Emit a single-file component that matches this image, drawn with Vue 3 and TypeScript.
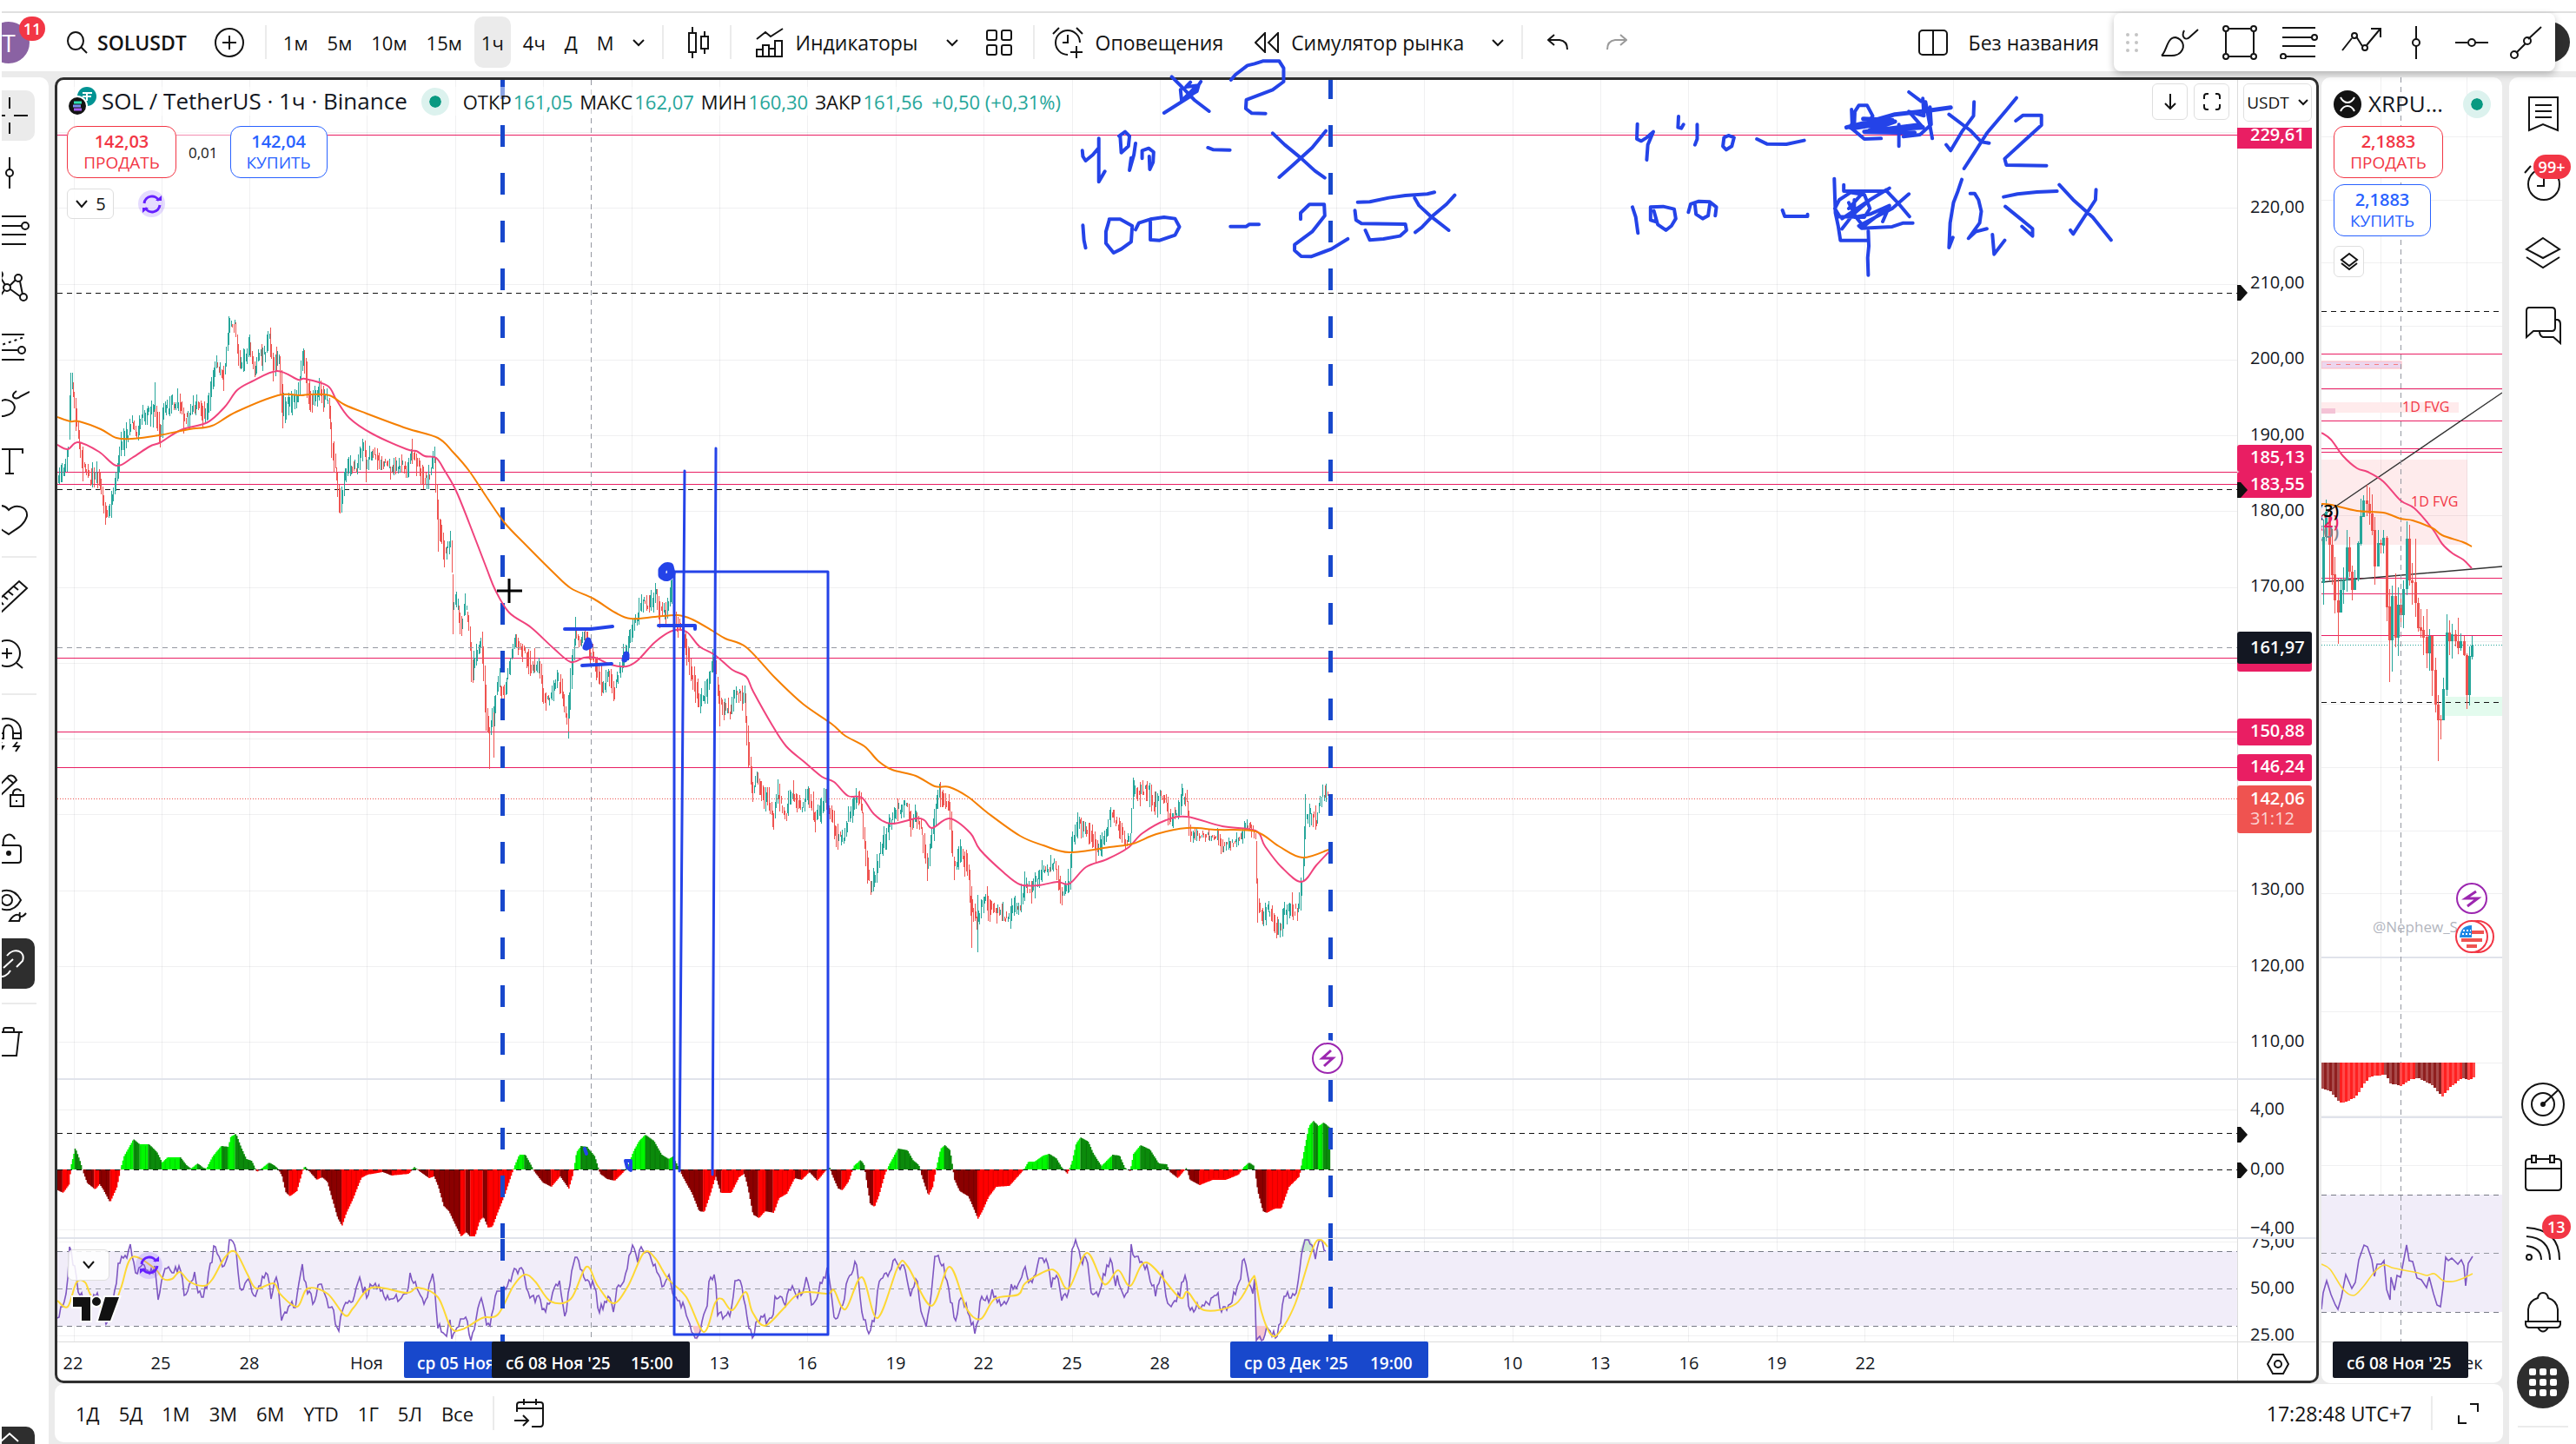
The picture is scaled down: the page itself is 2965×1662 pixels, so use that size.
<script setup lang="ts">
type Point = [number, number]

const intervals = ['1м', '5м', '10м', '15м', '1ч', '4ч', 'Д', 'М']
const ranges = ['1Д', '5Д', '1М', '3М', '6М', 'YTD', '1Г', '5Л', 'Все']

const toPoints = (raw: string): Point[] =>
  raw.trim().split(/\s+/).map((pair) => pair.split(',').map(Number) as Point)

/* Seeded generator, so the hourly series is the same on every load */
function randomSource(seed: number) {
  let state = seed
  return () => {
    state = (state * 1664525 + 1013904223) % 4294967296
    return state / 4294967296
  }
}

/* Linear interpolation between anchor points */
function sample(points: Point[], x: number): number {
  for (let i = 1; i < points.length; i++) {
    if (x <= points[i][0]) {
      const [x0, y0] = points[i - 1]
      const [x1, y1] = points[i]
      return y0 + ((y1 - y0) * (x - x0)) / (x1 - x0 || 1)
    }
  }
  return points[points.length - 1][1]
}

const line = (points: Point[]) => 'M' + points.map((p) => p.join(',')).join(' L')

/* Smooth path through the anchors (Catmull-Rom to Bezier) */
function curve(points: Point[]): string {
  let d = `M${points[0].join(',')}`
  for (let i = 0; i < points.length - 1; i++) {
    const p0 = points[i - 1] ?? points[i]
    const p1 = points[i]
    const p2 = points[i + 1]
    const p3 = points[i + 2] ?? p2
    const c = [p1[0] + (p2[0] - p0[0]) / 6, p1[1] + (p2[1] - p0[1]) / 6, p2[0] - (p3[0] - p1[0]) / 6, p2[1] - (p3[1] - p1[1]) / 6]
    d += ` C${c.map((n) => n.toFixed(1)).join(',')},${p2.join(',')}`
  }
  return d
}

const price = toPoints(`66,556 73,544 79,519 80,470 82,440 86,469 90,497 95,536 104,551 111,544 116,561 121,590 124,597 129,576 134,551 139,515
147,501 152,486 157,504 163,479 172,476 178,472 184,501 189,472 198,465 207,463 211,481 217,483 222,465 229,469 234,479 241,461
248,419 254,424 258,433 264,376 271,376 275,419 282,417 287,394 293,426 299,408 305,408 309,386 314,419 321,411 325,472 333,463
343,454 349,408 354,447 358,465 364,458 368,440 371,461 378,458 382,511 387,540 391,583 397,551 402,536 410,538 419,511 421,540
427,519 435,529 450,540 463,535 468,544 473,522 481,536 488,554 495,547 500,522 502,560 504,600 508,619 512,636 519,622 521,697
527,690 530,722 536,697 540,715 543,779 549,751 554,733 559,811 563,845 568,822 574,783 580,804 586,772 593,736 604,751 611,769
620,761 625,801 634,804 642,783 648,801 654,832 657,783 662,729 668,740 673,729 680,751 688,772 692,790 700,779 707,794 713,772
722,747 731,715 739,694 749,694 755,686 759,704 768,701 773,679 777,715 785,729 791,751 797,779 805,808 813,797 820,761 824,769
828,811 841,819 847,798 857,802 860,847 866,908 871,896 878,916 885,920 890,948 895,912 904,937 911,912 922,929 930,912 939,945
949,920 957,937 963,965 970,965 979,933 987,915 992,933 998,998 1002,1018 1008,1010 1014,974 1022,957 1030,933 1037,929 1044,929
1049,949 1054,937 1061,957 1067,1000 1073,961 1080,910 1087,920 1093,929 1098,998 1106,978 1114,1002 1118,1043 1125,1060 1129,1047
1134,1035 1141,1047 1149,1051 1160,1055 1168,1043 1174,1043 1180,1018 1187,1022 1198,1006 1206,1002 1214,994 1222,1027 1231,1014
1234,965 1241,949 1252,957 1263,978 1271,965 1278,937 1288,949 1296,969 1301,961 1304,908 1315,910 1323,910 1328,925 1339,916
1347,941 1355,937 1361,916 1366,920 1370,961 1385,961 1401,963 1406,976 1423,967 1430,961 1435,947 1445,961 1447,1030 1453,1055
1461,1047 1469,1071 1475,1071 1478,1049 1485,1045 1494,1049 1499,1018 1502,945 1509,937 1515,945 1522,912 1529,918`)

const fastMa = toPoints(`66,512 78,517 90,509 114,520 134,536 152,527 172,514 185,509 208,495 239,486 259,468 273,449 290,439 319,427
343,437 351,436 377,444 387,460 402,481 428,499 468,517 479,519 489,525 502,527 512,542 525,565 540,602 560,654 570,679 586,705 611,722
637,746 657,762 672,757 685,757 703,765 721,767 734,760 754,739 774,726 790,727 805,744 823,754 843,771 859,779 867,796 889,835
905,859 927,878 946,894 960,900 976,916 992,918 1006,937 1025,948 1054,942 1064,944 1073,953 1093,942 1117,959 1128,978 1155,1004
1174,1018 1195,1019 1217,1015 1231,1017 1250,998 1274,989 1298,976 1315,959 1342,944 1366,940 1407,951 1445,956 1456,974
1475,998 1498,1015 1515,996 1529,981`)

const slowMa = toPoints(`66,480 81,485 91,485 116,494 134,504 152,505 183,501 218,494 244,490 272,474 320,455 346,455 356,454 379,455
397,466 422,476 468,493 504,504 522,521 540,542 560,572 581,602 606,628 637,659 657,677 683,689 708,705 726,712 754,710 780,708
797,713 820,726 835,735 859,745 892,780 924,810 957,833 973,847 995,859 1011,876 1027,886 1054,893 1076,905 1093,906 1114,917
1136,935 1174,962 1201,973 1231,981 1277,975 1304,971 1331,960 1366,953 1401,955 1445,957 1472,974 1499,987 1529,978`)

const momentum = toPoints(`66,-24 72,-27 79,-17 81,4 86,25 92,8 95,-3 100,-16 109,-23 114,-17 118,-23 126,-38 134,-20 138,0 142,15
153,35 160,29 171,29 180,20 186,8 192,14 207,14 214,5 219,1 227,7 233,2 237,1 244,15 254,27 262,26 265,38 271,41 277,25 283,12
289,10 295,-3 300,1 309,8 316,4 320,0 324,-8 328,-26 333,-31 341,-25 347,-4 350,4 355,-2 364,-12 370,-9 376,-14 382,-35 388,-56
393,-65 398,-50 406,-33 415,-10 422,-6 440,-3 450,-7 470,-5 476,3 482,-2 493,-10 499,-8 504,-20 510,-42 516,-48 524,-65 530,-77
536,-72 540,-77 546,-77 552,-58 556,-55 561,-67 566,-66 572,-50 580,-30 586,-12 592,5 597,17 604,17 609,8 614,-2 624,-15 634,-20
644,-8 654,-22 659,-5 663,20 668,27 675,26 684,15 690,-5 698,-11 707,-13 716,-4 722,3 728,20 735,33 742,40 752,33 761,17 769,12
774,15 779,5 785,-8 796,-28 804,-48 810,-49 818,-25 823,-8 829,-27 841,-27 850,-9 856,-5 860,-20 866,-52 873,-56 880,-48 890,-50
896,-33 905,-28 914,-10 922,-12 931,-3 940,-13 950,-1 954,3 957,-6 964,-22 969,-24 976,-14 982,4 990,11 994,5 997,-15 1001,-40
1006,-43 1011,-30 1018,-5 1023,6 1033,24 1044,22 1050,11 1057,5 1061,-10 1068,-30 1073,-20 1077,2 1082,24 1087,28 1093,22
1098,-12 1104,-25 1114,-31 1120,-45 1125,-57 1130,-48 1137,-32 1146,-20 1161,-19 1170,-9 1178,0 1183,9 1190,9 1200,16 1207,18
1215,13 1221,3 1228,-5 1233,8 1238,30 1243,37 1252,32 1258,18 1267,4 1280,17 1288,16 1294,2 1300,-2 1304,18 1312,28 1323,23
1333,7 1342,6 1346,-3 1355,-10 1365,2 1369,-12 1380,-18 1395,-12 1410,-12 1425,-6 1431,3 1437,8 1443,4 1447,-25 1453,-48
1457,-50 1467,-45 1474,-45 1483,-20 1495,-8 1499,15 1506,50 1511,56 1517,50 1523,54 1530,48`)

const rsi = toPoints(`66,1520 72,1500 77,1488 80,1438 85,1455 90,1487 100,1500 112,1487 123,1528 130,1500 137,1450 145,1447 150,1433
157,1475 162,1455 172,1468 178,1460 182,1495 188,1465 200,1460 205,1465 207,1457 212,1490 218,1480 223,1465 231,1495 238,1478
246,1437 251,1442 259,1463 264,1428 271,1432 275,1480 280,1487 286,1470 293,1498 300,1476 307,1465 312,1490 319,1472 324,1518
330,1508 340,1500 348,1457 353,1485 360,1498 368,1478 375,1495 385,1515 390,1533 395,1502 405,1496 414,1475 422,1490 430,1477
440,1487 450,1498 462,1490 469,1493 472,1467 480,1483 488,1503 499,1465 504,1525 513,1538 518,1515 520,1542 527,1525 535,1512
541,1540 548,1522 553,1490 563,1532 570,1492 578,1488 585,1480 592,1460 603,1465 610,1495 620,1495 627,1508 635,1492 644,1475
651,1518 656,1475 661,1445 668,1460 676,1475 684,1480 690,1510 700,1490 706,1505 712,1478 720,1470 724,1440 729,1432 733,1450
740,1436 750,1447 757,1463 763,1480 770,1472 777,1495 788,1505 797,1535 802,1543 808,1520 814,1500 817,1470 823,1468 826,1515
841,1513 846,1473 852,1475 859,1513 866,1543 870,1522 877,1510 882,1520 888,1517 893,1493 904,1498 909,1482 923,1493 929,1470
935,1507 944,1480 953,1462 957,1493 962,1522 969,1503 977,1470 986,1453 991,1500 999,1537 1007,1513 1012,1473 1026,1460
1029,1443 1037,1460 1042,1457 1048,1490 1055,1473 1061,1513 1066,1528 1072,1490 1076,1443 1083,1450 1091,1477 1099,1523
1106,1493 1115,1510 1123,1537 1129,1493 1137,1497 1143,1487 1151,1498 1159,1498 1164,1483 1172,1483 1180,1460 1186,1477
1197,1450 1206,1455 1210,1480 1216,1467 1222,1498 1229,1490 1234,1443 1238,1431 1246,1450 1251,1443 1255,1483 1264,1493
1270,1470 1279,1447 1284,1480 1286,1463 1293,1497 1299,1490 1302,1435 1308,1450 1319,1457 1330,1487 1338,1467 1346,1507
1356,1493 1365,1465 1369,1513 1378,1503 1389,1503 1401,1487 1405,1510 1416,1500 1422,1487 1427,1480 1431,1447 1436,1467
1441,1490 1444,1477 1446,1540 1453,1543 1459,1527 1469,1541 1474,1523 1476,1497 1482,1487 1491,1497 1495,1470 1501,1427
1508,1427 1514,1445 1520,1428 1525,1438 1528,1437`)

const rsiMa = toPoints(`66,1497 78,1504 88,1476 98,1476 106,1493 127,1510 139,1483 152,1447 178,1460 188,1472 198,1472 207,1464
218,1475 234,1480 244,1473 259,1447 271,1441 285,1467 295,1483 315,1477 323,1490 342,1504 354,1483 377,1489 397,1514 407,1505
428,1482 468,1488 481,1482 504,1493 519,1528 532,1530 555,1517 573,1513 591,1480 604,1467 616,1475 634,1498 657,1495 675,1458
688,1480 706,1500 723,1480 741,1442 754,1448 769,1472 790,1493 810,1533 823,1500 831,1495 843,1508 858,1487 866,1510 880,1526
901,1507 915,1492 928,1487 953,1489 960,1485 973,1507 992,1470 1010,1517 1034,1457 1045,1458 1072,1503 1093,1458 1113,1507
1129,1518 1145,1495 1172,1490 1180,1477 1206,1462 1217,1465 1230,1483 1251,1442 1271,1478 1287,1462 1301,1480 1320,1453
1357,1493 1367,1487 1386,1508 1422,1501 1441,1472 1445,1473 1452,1510 1463,1536 1473,1533 1491,1500 1511,1437 1520,1427 1528,1435`)

const hour = 1.41
let upWicks = ''
let downWicks = ''
const rndPrice = randomSource(11)
for (let x = 67; x < 1530; x += hour) {
  const before = sample(price, x - hour)
  const now = sample(price, x)
  const slope = Math.abs(now - before)
  const calm = x > 1368 && x < 1444 ? 0.6 : 1
  const mid = now + (rndPrice() - 0.5) * 11 * calm
  const half = (2 + Math.pow(rndPrice(), 2) * 12) * calm + slope * 0.6
  const goesUp = now - before < (rndPrice() - 0.5) * 4
  const seg = `M${Math.round(x) + 0.5},${Math.round(mid - half)}V${Math.round(mid + half)}`
  if (goesUp) upWicks += seg
  else downWicks += seg
}
downWicks += 'M563.5,840V885 M568.5,820V872 M1118.5,1020V1091'
upWicks += 'M1125.5,1030V1096 M654.5,800V850 M178.5,440V480'

type BarKind = 'rise' | 'fade' | 'deep' | 'ease'
const momentumBars: Record<BarKind, string> = { rise: '', fade: '', deep: '', ease: '' }
let momentumEdges = ''
let barIndex = 0
for (let x = 66; x < 1530; x += hour) {
  const v = sample(momentum, x)
  const next = sample(momentum, x + hour)
  const h = Math.abs(v)
  const kind: BarKind = v >= 0 ? (next >= v ? 'rise' : 'fade') : next < v ? 'deep' : 'ease'
  momentumBars[kind] += `M${x.toFixed(1)},${(v >= 0 ? 1346 - h : 1346).toFixed(1)}h1.6v${h.toFixed(1)}h-1.6z`
  if (barIndex++ % 4 === 0 && h > 4) momentumEdges += `M${x.toFixed(1)},${(v >= 0 ? 1348 - h : 1346).toFixed(1)}v${(h - 2).toFixed(1)}`
}

const rndRsi = randomSource(5)
const rsiTrace: Point[] = []
for (let x = 66; x < 1528; x += 2) {
  const y = sample(rsi, x) + (rndRsi() - 0.5) * 11
  rsiTrace.push([x, Math.min(1543, Math.max(1427, Math.round(y)))])
}

const dayLines = Array.from({ length: 22 }, (_, i) => Math.round(i < 3 ? 85 + i * 101.2 : 321 + (i - 2) * 101.4))
const priceLines = Array.from({ length: 13 }, (_, i) => Math.round(152 + i * 87.25))
const levels = [155, 543, 557, 757, 842, 883]
const timeLabels = [
  { x: 84, t: '22' }, { x: 185, t: '25' }, { x: 287, t: '28' }, { x: 422, t: 'Ноя' },
  { x: 828, t: '13' }, { x: 929, t: '16' }, { x: 1031, t: '19' }, { x: 1132, t: '22' }, { x: 1234, t: '25' }, { x: 1335, t: '28' },
  { x: 1741, t: '10' }, { x: 1842, t: '13' }, { x: 1944, t: '16' }, { x: 2045, t: '19' }, { x: 2147, t: '22' },
]
const axisLabels = [
  { y: 239, t: '220,00' }, { y: 326, t: '210,00' }, { y: 413, t: '200,00' }, { y: 501, t: '190,00' }, { y: 588, t: '180,00' },
  { y: 675, t: '170,00' }, { y: 1024, t: '130,00' }, { y: 1112, t: '120,00' }, { y: 1199, t: '110,00' },
  { y: 1277, t: '4,00' }, { y: 1346, t: '0,00' }, { y: 1414, t: '−4,00' },
]
const axisTags = [
  { y: 512, h: 31, t: '185,13' }, { y: 543, h: 30, t: '183,55' }, { y: 827, h: 31, t: '150,88' }, { y: 868, h: 31, t: '146,24' },
]
const axisMarks = [337, 564, 1306, 1347]

/* Side chart: x, body top, body bottom, wick top, wick bottom, 1 = rising */
const sideX = (v: number) => Math.round(2540 + v / 3)
const sideY = (v: number) => Math.round(380 + v / 2.8)
const sideCandles = [
  [403, 667, 815, 610, 885, 1], [412, 585, 667, 545, 680, 1], [424, 600, 692, 590, 805, 0], [433, 692, 790, 640, 820, 0],
  [442, 788, 872, 730, 912, 0], [454, 872, 909, 800, 1010, 0], [463, 838, 909, 800, 909, 1], [472, 807, 838, 765, 882, 1],
  [484, 700, 807, 645, 843, 1], [493, 700, 777, 665, 795, 0], [502, 777, 837, 758, 870, 0], [511, 803, 837, 772, 837, 1],
  [523, 686, 803, 680, 810, 1], [532, 600, 688, 543, 693, 1], [541, 549, 602, 532, 602, 1], [553, 549, 561, 497, 600, 0],
  [562, 560, 592, 507, 628, 0], [571, 590, 646, 530, 660, 0], [580, 645, 761, 603, 820, 0], [592, 686, 762, 645, 762, 1],
  [601, 686, 692, 675, 720, 0], [610, 670, 694, 645, 720, 1], [622, 670, 892, 663, 938, 0], [631, 890, 1000, 835, 1133, 0],
  [640, 857, 1000, 823, 1100, 1], [652, 857, 990, 785, 1022, 0], [661, 885, 990, 830, 1050, 1], [670, 885, 918, 865, 955, 0],
  [679, 833, 918, 805, 960, 1], [691, 672, 833, 615, 853, 1], [700, 672, 807, 627, 822, 0], [709, 807, 815, 750, 885, 0],
  [721, 812, 878, 672, 923, 0], [730, 878, 959, 862, 972, 0], [739, 958, 968, 898, 992, 0], [748, 967, 990, 920, 1047, 0],
  [760, 988, 1042, 898, 1088, 0], [769, 985, 1042, 963, 1098, 1], [778, 985, 1097, 985, 1178, 0], [790, 1095, 1208, 1055, 1232, 0],
  [799, 1207, 1258, 1175, 1388, 0], [808, 1253, 1258, 1240, 1318, 0], [817, 1157, 1256, 1120, 1256, 1], [829, 975, 1158, 916, 1180, 1],
  [838, 975, 1001, 935, 1047, 0], [847, 981, 1001, 945, 1058, 1], [859, 981, 1003, 965, 1018, 0], [868, 1001, 1024, 927, 1043, 0],
  [877, 1001, 1024, 977, 1033, 1], [889, 1001, 1048, 985, 1050, 0], [898, 1048, 1175, 1042, 1220, 0], [907, 1051, 1175, 1020, 1210, 1],
  [916, 1015, 1052, 985, 1060, 1],
].map(([x, top, bottom, high, low, up]) => ({
  x: sideX(x), top: sideY(top), h: Math.max(1, sideY(bottom) - sideY(top)), high: sideY(high), low: sideY(low), up: up === 1,
}))
const sideLevels = [407, 447, 484, 516, 520, 665, 683, 731]
const sideRows = [157, 230, 302, 375, 448, 520, 593, 665, 738, 810, 883, 956, 1028, 1164, 1223, 1284, 1341, 1408, 1476]
const sideFast = toPoints('2672,498 2683,506 2697,525 2713,539 2725,543 2743,554 2763,576 2779,585 2800,609 2811,626 2823,637 2835,644 2845,654')
const sideSlow = toPoints('2672,580 2683,581 2713,588 2743,590 2763,597 2777,599 2800,608 2811,616 2835,624 2845,629')
const lowerScale = (p: Point): Point => [Math.round(2500 + p[0] / 3), Math.round(920 + p[1] / 2.113)]
const sideMomentum = toPoints(`516,703 540,708 575,738 590,738 630,725 660,690 680,673 735,670 750,690 790,698 820,680 845,678 890,693
930,722 960,698 1000,678 1020,682 1044,673`).map(lowerScale)
const sideBars: { x: number; h: number; fill: string }[] = []
for (let x = 2672, i = 0; x < 2847; x += 3, i++) {
  const y = sample(sideMomentum, x)
  const deeper = sample(sideMomentum, x + 3) > y
  sideBars.push({ x, h: Math.round(y - 1223), fill: deeper ? (i % 2 ? '#8f1f1f' : '#a84a4a') : i % 2 ? '#ff2020' : '#ff4a4a' })
}
const sideRsi = toPoints(`516,1240 521,1200 533,1170 550,1205 563,1230 573,1240 585,1210 600,1155 620,1190 632,1175 645,1120 662,1083
674,1088 690,1120 699,1160 709,1130 722,1130 731,1122 741,1192 752,1218 757,1162 768,1193 778,1157 790,1163 810,1083 820,1122 832,1125
847,1165 860,1168 878,1187 888,1163 902,1203 915,1230 926,1233 936,1185 945,1114 955,1122 967,1115 988,1130 998,1120 1007,1135
1014,1183 1024,1128 1037,1112`).map(lowerScale)
const sideRsiMa = toPoints(`516,1131 545,1143 590,1192 628,1207 660,1185 700,1150 733,1133 760,1138 800,1145 850,1151 880,1158 905,1153
935,1170 970,1173 1000,1167 1037,1154`).map(lowerScale)

const notesLeft = `M584,265 L605,305 625,345 652,384 M637,282 L620,330 570,390 M600,310 L602,347 630,315 633,295 610,300 618,284 M604,345 L625,305
M692,276 L700,258 722,226 735,220 750,211 780,211 788,235 788,282 768,310 720,345 719,375 730,391 755,392
M421,520 L422,540 427,555 440,535 451,510 M451,478 V628 L462,592
M488,470 L499,455 507,470 505,505 492,527 490,470 M518,495 L515,535 507,588 510,545 M530,547 L530,520 542,512 551,525 550,560 544,585 543,540
M650,510 L660,517 690,518 M768,460 L790,500 819,545 845,590 863,614 M865,452 L840,510 805,570 780,612
M422,778 L424,830 427,856 M470,760 L464,800 464,840 478,873 492,860 510,835 512,780 490,757 470,757 M518,793 L524,770 545,757 570,750 590,755 598,783 590,812 562,830 545,828 545,757
M691,782 H720 L725,775 H743 M819,757 V735 L835,706 H862 L863,745 840,800 808,845 808,865 820,885 838,886 875,860 905,825
M923,698 L945,697 980,683 1010,675 1050,670 1063,664 M918,727 L920,760 930,772 1010,774 1012,795 1000,815 970,825 945,829 937,795
M1027,684 L1035,710 1055,745 1089,795 M1100,674 L1085,705 1060,745 1040,785 1028,802
M1433,428 L1432,480 1440,487 1450,475 1462,455 1452,500 1450,552 M1508,402 L1507,440 1513,443 1517,430 M1542,430 V480 L1538,500
M1424,715 L1430,750 1434,805 M1466,765 L1457,760 1457,715 1480,713 1500,722 1503,755 1495,780 1485,795 1470,775 1463,728
M1526,733 L1530,705 1545,695 1565,697 1577,715 1575,745 M1538,708 L1540,740 1552,755 1562,745 1565,705`
const notesRight = `M38,475 L36,505 42,517 52,505 56,475 46,468 Z M97,480 L115,497 150,498 182,485
M267,378 L268,425 265,440 290,480 320,478 M272,430 L273,385 280,364 295,364 305,400 295,430 265,442 M370,318 L392,350 400,352 412,478 M395,340 L397,400 370,385 395,440 M352,430 V505 M408,370 L410,430 390,465 360,472
M442,395 L480,450 500,490 514,494 M487,352 L486,400 465,455 445,520 437,500 M563,338 L545,380 510,460 490,520 469,582
M562,417 L575,398 H608 L608,432 575,490 542,548 545,570 617,572 M143,726 L147,747 188,747 188,740
M236,617 L238,735 243,780 247,830 H295 M253,638 L253,660 H330 M330,655 L300,690 270,740 250,790 M245,745 L237,720 245,690 265,665 290,672 300,720 290,750 240,748
M262,700 L275,750 290,785 M272,690 V750 L300,740 335,710 M370,670 L340,720 280,780 285,788 340,783 360,770 377,770 M330,660 L350,700 371,748 M250,755 L300,690 335,650 M285,670 L262,720 M323,765 L335,712 290,780 M297,798 L298,850 296,890 297,950
M465,620 L458,660 450,700 444,770 442,855 449,820 M480,668 L488,668 495,690 500,730 497,770 477,823 490,800 510,790 M520,810 L523,878 542,830
M540,680 L565,670 600,663 636,660 M543,713 L570,755 592,790 592,815 573,782 M640,638 L665,690 700,750 733,829 M706,655 L705,690 665,808 660,795`
const notesThick = 'M258,440 L300,420 345,395 400,383 445,371 M270,443 L345,420 300,450 395,440 385,432 290,455 380,458 M288,410 L340,415 295,432'
</script>

<template>
  <div class="app">
    <div class="strip"></div>
    <header class="header">
      <button class="avatar" aria-label="Профиль"><span class="face">T</span><span class="badge">11</span></button>
      <button class="search m20">
        <svg width="26" height="26" viewBox="0 0 26 26"><ellipse cx="11" cy="11" rx="9" ry="10" /><path d="M17,18 L24,25" /></svg>
        <b>SOLUSDT</b>
      </button>
      <button class="m32" aria-label="Добавить символ"><svg width="34" height="34" viewBox="0 0 34 34"><circle cx="17" cy="17" r="16" /><path d="M17,9V25M9,17H25" /></svg></button>
      <i class="sep m24"></i>
      <nav class="intervals">
        <button v-for="item in intervals" :key="item" :class="{ active: item === '1ч' }">{{ item }}</button>
      </nav>
      <button class="m10" aria-label="Интервалы"><svg width="14" height="10" viewBox="0 0 14 10"><path d="M1,2 L7,8 13,2" /></svg></button>
      <i class="sep m20"></i>
      <button class="m28" aria-label="Вид графика"><svg width="24" height="36" viewBox="0 0 24 36"><path d="M1,7H9V29H1ZM5,0V7M5,29V36M15,11H23V25H15ZM19,5V11M19,25V31" /></svg></button>
      <i class="sep m24"></i>
      <button class="m28"><svg width="32" height="34" viewBox="0 0 32 34"><path d="M1,13 L11,5 17,10 31,1 M1,33V25H8V33ZM8,33V20H15V33ZM15,33V24H22V33ZM22,33V15H30V33Z" /></svg><span class="m14">Индикаторы</span></button>
      <button class="m32" aria-label="Избранные индикаторы"><svg width="14" height="10" viewBox="0 0 14 10"><path d="M1,2 L7,8 13,2" /></svg></button>
      <button class="m32" aria-label="Шаблоны"><svg width="30" height="30" viewBox="0 0 30 30"><rect x="1" y="1" width="11" height="11" rx="2" /><rect x="18" y="1" width="11" height="11" rx="2" /><rect x="1" y="18" width="11" height="11" rx="2" /><rect x="18" y="18" width="11" height="11" rx="2" /></svg></button>
      <i class="sep m24"></i>
      <button class="m20"><svg width="36" height="36" viewBox="0 0 36 36"><path d="M18,32 A14,14 0 1 1 32,18 M18,9V18H12 M1,8 L8,1 M28,1 L35,8 M28,22V36 M21,29H35" /></svg><span class="m14">Оповещения</span></button>
      <button class="m36"><svg width="28" height="24" viewBox="0 0 28 24"><path d="M12,1V23L1,12ZM27,1V23L16,12Z" /></svg><span class="m14">Симулятор рынка</span></button>
      <button class="m32" aria-label="Режимы симулятора"><svg width="14" height="10" viewBox="0 0 14 10"><path d="M1,2 L7,8 13,2" /></svg></button>
      <i class="sep m20"></i>
      <button class="m28" aria-label="Отменить"><svg width="24" height="20" viewBox="0 0 24 20"><path d="M8,1 L1,7 8,13 M1,7H14Q23,8 23,18" /></svg></button>
      <button class="m44 faint" aria-label="Повторить"><svg width="24" height="20" viewBox="0 0 24 20"><path d="M16,1 L23,7 16,13 M23,7H10Q1,8 1,18" /></svg></button>
      <div class="header-end">
        <button aria-label="Разметка"><svg width="34" height="30" viewBox="0 0 34 30"><rect x="1" y="1" width="32" height="28" rx="4" /><path d="M17,1V29" /></svg></button>
        <button class="m24">Без названия</button>
        <span class="publish"></span>
      </div>
    </header>

    <div class="favorites">
      <svg class="grip" width="14" height="22" viewBox="0 0 14 22"><g><circle v-for="n in 6" :key="n" :cx="n % 2 ? 2 : 12" :cy="2 + Math.floor((n - 1) / 2) * 9" r="2" /></g></svg>
      <button aria-label="Кисть"><svg width="46" height="40" viewBox="0 0 46 40"><path d="M2,35 C8,30 8,14 18,14 C26,16 30,24 24,31 C20,36 12,35 2,35 M28,6 C24,14 30,18 34,14 L44,5" /></svg></button>
      <button aria-label="Прямоугольник"><svg width="40" height="40" viewBox="0 0 40 40"><path d="M4,8V32M36,8V32M8,4H32M8,36H32" /><circle cx="4" cy="4" r="3" /><circle cx="36" cy="4" r="3" /><circle cx="4" cy="36" r="3" /><circle cx="36" cy="36" r="3" /></svg></button>
      <button aria-label="Коррекция Фибоначчи"><svg width="46" height="38" viewBox="0 0 46 38"><path d="M4,2H42M4,13H38M4,23H42M8,35H42" /><circle cx="41" cy="13" r="3" /><circle cx="5" cy="35" r="3" /></svg></button>
      <button aria-label="Путь"><svg width="46" height="38" viewBox="0 0 46 38"><path d="M1,28 L12,14 M17,12 L24,23 M29,22 L44,4 M34,3H45V13" /><circle cx="15" cy="11" r="3" /><circle cx="27" cy="25" r="3" /></svg></button>
      <button aria-label="Вертикальная линия"><svg width="34" height="38" viewBox="0 0 34 38"><path d="M15,0V15M15,23V38" /><circle cx="15" cy="19" r="4" /></svg></button>
      <button aria-label="Горизонтальная линия"><svg width="38" height="20" viewBox="0 0 38 20"><path d="M0,10H14M23,10H38" /><circle cx="19" cy="10" r="4" /></svg></button>
      <button aria-label="Линия тренда"><svg width="38" height="40" viewBox="0 0 38 40"><path d="M7,32 L18,21 M21,16 L36,2" /><circle cx="5" cy="34" r="4" /><circle cx="20" cy="18" r="4" /></svg></button>
    </div>

    <main class="body">
      <aside class="tools">
        <button class="on" aria-label="Перекрестие"><svg width="46" height="46" viewBox="0 0 46 46"><path d="M23,2V15M23,31V44M28,23H44M2,23H18" /></svg></button>
        <button aria-label="Вертикальная линия"><svg width="46" height="46" viewBox="0 0 46 46"><path d="M23,5V19M23,27V41" /><circle cx="23" cy="23" r="4" /></svg></button>
        <button aria-label="Фибоначчи"><svg width="46" height="46" viewBox="0 0 46 46"><path d="M2,7H42M2,18H37M2,28H42M2,39H42" /><circle cx="41" cy="18" r="4" /></svg></button>
        <button aria-label="Фигуры"><svg width="46" height="46" viewBox="0 0 46 46"><path d="M13,12 L18,20M23,21 L30,14M35,16 L38,31M24,25 L35,33M17,26 L12,33" /><circle cx="11" cy="8" r="4" /><circle cx="20" cy="23" r="4" /><circle cx="33" cy="12" r="4" /><circle cx="39" cy="34" r="4" /></svg></button>
        <button aria-label="Прогнозы"><svg width="46" height="46" viewBox="0 0 46 46"><path d="M2,11H40M2,29H32M2,40H40" /><path d="M2,27 L40,14" stroke-dasharray="3 4" /><circle cx="37" cy="29" r="4" /></svg></button>
        <button aria-label="Кисть"><svg width="46" height="46" viewBox="0 0 46 46"><path d="M2,39 C10,34 6,22 18,20 C28,21 32,29 26,35 C20,40 12,39 2,39 M31,10 C22,16 30,22 36,16 L46,11" /></svg></button>
        <button aria-label="Текст"><svg width="46" height="46" viewBox="0 0 46 46"><path d="M8,16V11H38V16M23,11V39M18,39H28" /></svg></button>
        <button aria-label="Значки"><svg width="46" height="46" viewBox="0 0 46 46"><path d="M22,15 C30,7 44,11 43,22 C40,33 30,37 22,43 C10,35 2,31 2,20 C4,9 16,7 22,15Z" /></svg></button>
        <i class="rule"></i>
        <button aria-label="Линейка"><svg width="46" height="46" viewBox="0 0 46 46"><path d="M34,5 L43,13 12,42 2,34ZM28,11 L33,15M22,17 L27,21M16,22 L21,26M11,27 L16,32" /></svg></button>
        <button aria-label="Приблизить"><svg width="46" height="46" viewBox="0 0 46 46"><circle cx="20" cy="22" r="15" /><path d="M31,33 L38,39M20,16V28M14,22H26" /></svg></button>
        <i class="rule"></i>
        <button aria-label="Магнит"><svg width="46" height="46" viewBox="0 0 46 46"><path d="M2,28 V20 C2,0 36,0 36,20 V28 H27 V20 C27,10 16,10 16,20 V28 H8M27,22H36M8,22H16M32,32 L28,37H34L30,43M14,32 L10,37H16L12,43" /></svg></button>
        <button aria-label="Режим рисования"><svg width="46" height="46" viewBox="0 0 46 46"><path d="M2,26 L22,5 Q28,3 31,10 L10,30M20,7 L28,14M24,27H39V40H24ZM27,27C26,19 35,19 36,23" /><path d="M31,33V35" /></svg></button>
        <button aria-label="Заблокировать"><svg width="46" height="46" viewBox="0 0 46 46"><path d="M5,19H33Q36,19 36,22V36Q36,39 33,39H5M16,19C14,5 26,3 29,12" /><circle cx="22" cy="28" r="2" class="solid" /></svg></button>
        <button aria-label="Скрыть"><svg width="46" height="46" viewBox="0 0 46 46"><path d="M2,16 C12,1 28,1 36,16 C28,31 12,31 2,16M23,40 C29,30 38,31 34,40ZM35,30C33,36 37,37 42,31" /><circle cx="20" cy="16" r="6" /></svg></button>
        <button class="dark" aria-label="Связать"><svg width="46" height="46" viewBox="0 0 46 46"><path d="M20,14 C28,4 42,8 38,20 L31,27M27,18 L16,28M24,31 C18,42 2,40 6,26 L12,20" /></svg></button>
        <i class="rule"></i>
        <button aria-label="Удалить"><svg width="46" height="46" viewBox="0 0 46 46"><path d="M6,10H38M16,10V7Q16,5 18,5H26Q28,5 28,7V10M10,10 L12,37H31L34,10" /></svg></button>
        <button class="dark last" aria-label="Развернуть"><svg width="46" height="46" viewBox="0 0 46 46"><path d="M13,17 L23,8 33,17" /></svg></button>
      </aside>

      <div class="center">
        <div class="charts">
          <section class="frame">
            <div class="plot">
              <svg class="fill" width="100%" height="100%">
                <g transform="translate(-66,-92)">
                  <g class="grid">
                    <path v-for="x in dayLines" :key="'v' + x" :d="`M${x}.5,92V1544`" />
                    <path v-for="y in priceLines" :key="'h' + y" :d="`M66,${y}.5H2575`" />
                    <path d="M66,1277.5H2575M66,1415.5H2575M66,1429.5H2575M66,1537.5H2575" />
                  </g>
                  <rect x="66" y="1440" width="2509" height="86" fill="#f1edf9" />
                  <path class="pane-line" d="M66,1242H2575M66,1425H2575" />
                  <path d="M66,1544.5H2575" stroke="#dcdcdc" />
                  <path v-for="y in levels" :key="'l' + y" class="level" :d="`M66,${y}.5H2575`" />
                  <path class="dash" d="M66,337.5H2575M66,563.5H2575M66,1304.5H2575M66,1346.5H2575" />
                  <path class="dash soft" d="M66,1440.5H2575M66,1526.5H2575" />
                  <path class="dash pale" d="M66,1483.5H2575" />
                  <path d="M66,919.5H2575" stroke="#ef5350" stroke-dasharray="1 2" />
                  <path d="M1496,1440 L1501,1426 1508,1426 1514,1440Z" fill="#cfe8d5" />
                  <path d="M1446,1526 L1446,1541 1453,1543 1459,1526ZM797,1526 L802,1543 808,1526Z" fill="#f7c6d0" />
                  <g class="candles">
                    <path :d="upWicks" stroke="#26a69a" />
                    <path :d="downWicks" stroke="#ef5350" />
                  </g>
                  <path class="dash pale" d="M680.5,92V1544M66,745.5H2575" />
                  <path :d="momentumBars.rise" fill="#00f800" />
                  <path :d="momentumBars.fade" fill="#0b8a0b" />
                  <path :d="momentumBars.deep" fill="#8b0000" />
                  <path :d="momentumBars.ease" fill="#ff0000" />
                  <path :d="momentumEdges" stroke="#000" stroke-opacity=".15" fill="none" />
                  <path class="dash" d="M66,1346.5H2575" />
                  <path :d="line(rsiTrace)" stroke="#7e57c2" stroke-width="1.6" fill="none" />
                  <path :d="curve(rsiMa)" stroke="#fdd835" stroke-width="2" fill="none" />
                  <g class="event-lines">
                    <path v-for="x in [578, 1531]" :key="x" :d="`M${x}.5,89V1242`" />
                    <path v-for="x in [578, 1531]" :key="'m' + x" :d="`M${x}.5,1243V1425`" />
                    <path v-for="x in [578, 1531]" :key="'r' + x" :d="`M${x}.5,1426V1544`" />
                  </g>
                  <path :d="curve(fastMa)" stroke="#f0437d" stroke-width="2" fill="none" />
                  <path :d="curve(slowMa)" stroke="#f57f00" stroke-width="2" fill="none" />
                  <g class="bolt"><circle cx="1528" cy="1218" r="20" class="halo" /><circle cx="1528" cy="1218" r="17" /><path d="M1532,1209 L1522,1218H1534L1524,1227" /></g>
                  <g class="time-text">
                    <text v-for="l in timeLabels" :key="l.x" :x="l.x" y="1576">{{ l.t }}</text>
                  </g>
                  <g class="time-tag">
                    <rect x="465" y="1544" width="120" height="42" rx="2" fill="#1848cc" /><text x="480" y="1576">ср 05 Ноя</text>
                    <rect x="566" y="1544" width="228" height="42" rx="2" fill="#131722" /><text x="582" y="1576">сб 08 Ноя '25</text><text x="726" y="1576">15:00</text>
                    <rect x="1416" y="1544" width="228" height="42" rx="2" fill="#1848cc" /><text x="1432" y="1576">ср 03 Дек '25</text><text x="1577" y="1576">19:00</text>
                  </g>
                  <path d="M84,1493H104V1520H94V1504H84ZM106,1498a5,5 0 1 0 10,0a5,5 0 1 0 -10,0M121,1493H137L127,1520H113Z" fill="#111" stroke="#fff" stroke-width="4" paint-order="stroke" />
                </g>
              </svg>
              <div class="legend">
                <div class="title">
                  <svg class="coin" width="36" height="36" viewBox="0 0 36 36"><circle cx="23" cy="12" r="11" fill="#009393" /><path d="M18,8H29M23,8V17M18,12H28" stroke="#fff" stroke-width="2" /><circle cx="12" cy="23" r="12" fill="#fff" /><circle cx="12" cy="23" r="10" fill="#131313" /><path d="M8,19H17" stroke="#2fe0b0" stroke-width="3" /><path d="M7,23H16" stroke="#7a8cf0" stroke-width="3" /><path d="M8,27H17" stroke="#a45cf0" stroke-width="3" /></svg>
                  <h1>SOL / TetherUS · 1ч · Binance</h1>
                  <span class="status"></span>
                  <p class="ohlc"><span>ОТКР<em>161,05</em></span><span>МАКС<em>162,07</em></span><span>МИН<em>160,30</em></span><span>ЗАКР<em>161,56</em></span><em>+0,50 (+0,31%)</em></p>
                </div>
                <div class="trade">
                  <button class="sell"><b>142,03</b>ПРОДАТЬ</button>
                  <span class="spread">0,01</span>
                  <button class="buy"><b>142,04</b>КУПИТЬ</button>
                </div>
                <div class="more">
                  <button class="chip"><svg width="16" height="10" viewBox="0 0 16 10"><path d="M2,1 L8,8 14,1" /></svg>5</button>
                  <span class="sync"><svg width="24" height="24" viewBox="0 0 24 24"><path d="M3,11A9,9 0 0 1 20,8M21,13A9,9 0 0 1 4,16" /><path d="M16,8H23V2ZM8,16H1V22Z" class="tip" /></svg></span>
                </div>
              </div>
              <div class="pane-legend">
                <button class="chip" aria-label="Свернуть"><svg width="16" height="10" viewBox="0 0 16 10"><path d="M2,1 L8,8 14,1" /></svg></button>
                <span class="sync"><svg width="24" height="24" viewBox="0 0 24 24"><path d="M3,11A9,9 0 0 1 20,8M21,13A9,9 0 0 1 4,16" /><path d="M16,8H23V2ZM8,16H1V22Z" class="tip" /></svg></span>
              </div>
              <div class="corner">
                <button class="chip" aria-label="Прокрутить"><svg width="16" height="20" viewBox="0 0 16 20"><path d="M8,1V18M2,12 L8,18 14,12" /></svg></button>
                <button class="chip" aria-label="Развернуть график"><svg width="20" height="22" viewBox="0 0 20 22"><path d="M1,8V5Q1,2 4,2H6M14,2H16Q19,2 19,5V8M19,14V17Q19,20 16,20H14M6,20H4Q1,20 1,17V14" /></svg></button>
              </div>
            </div>
            <div class="axis">
              <svg class="fill" width="100%" height="100%">
                <g transform="translate(-2575,-92)">
                  <g class="axis-text">
                    <text v-for="l in axisLabels" :key="l.t" x="2590" :y="l.y + 6">{{ l.t }}</text>
                    <text x="2590" y="1489">50,00</text>
                    <svg x="2576" y="1426" width="90" height="117"><text x="14" y="10">75,00</text><text x="14" y="117">25,00</text></svg>
                  </g>
                  <path d="M2575.5,92V1589" stroke="#dcdcdc" />
                  <path d="M2575,1242H2666M2575,1425H2666" class="pane-line" />
                  <path d="M2575,1544.5H2666" stroke="#dcdcdc" />
                  <g class="axis-tag">
                    <path d="M2575,147H2661V171H2575Z" fill="#e91e63" /><text x="2590" y="162">229,61</text>
                    <g v-for="t in axisTags" :key="t.t"><rect x="2575" :y="t.y" width="86" :height="t.h" rx="3" fill="#e91e63" /><text x="2590" :y="t.y + Math.floor(t.h / 2) + 6">{{ t.t }}</text></g>
                    <rect x="2575" y="743" width="86" height="30" rx="3" fill="#e91e63" />
                    <rect x="2575" y="727" width="86" height="37" rx="3" fill="#131722" /><text x="2590" y="752">161,97</text>
                    <rect x="2575" y="904" width="86" height="55" rx="3" fill="#ef5350" /><text x="2590" y="926">142,06</text><text x="2590" y="949" class="countdown">31:12</text>
                  </g>
                  <path v-for="y in axisMarks" :key="y" :d="`M2575,${y - 9}H2579L2587,${y}L2579,${y + 9}H2575Z`" fill="#111" />
                </g>
              </svg>
              <button class="currency">USDT<svg width="12" height="8" viewBox="0 0 12 8"><path d="M1,1 L6,6 11,1" /></svg></button>
              <button class="axis-settings" aria-label="Настройки шкалы"><svg width="28" height="26" viewBox="0 0 28 26"><path d="M8,2H20L26,13 20,24H8L2,13Z" /><circle cx="14" cy="13" r="4" /></svg></button>
            </div>
          </section>

          <section class="side">
            <svg class="fill" width="100%" height="100%">
              <g transform="translate(-2672,-89)">
                <g class="grid"><path v-for="y in sideRows" :key="y" :d="`M2672,${y}.5H2880`" /><path d="M2740.5,89V1544M2839.5,89V1544" /></g>
                <rect x="2672" y="463" width="158" height="12" fill="#ffebec" /><rect x="2672" y="529" width="168" height="98" fill="#f23645" fill-opacity=".1" />
                <rect x="2672" y="416" width="92" height="8" fill="#ecd6ee" stroke="#ffb9c0" /><rect x="2672" y="470" width="16" height="6" fill="#f4c3d6" />
                <path d="M2678,419.5H2763" stroke="#f77c80" stroke-dasharray="5 6" /><rect x="2814" y="802" width="66" height="22" fill="#e3fbee" />
                <rect x="2672" y="1375" width="208" height="135" fill="#f1edf9" />
                <path class="pane-line" d="M2672,1102H2880M2672,1286H2880" /><path d="M2672,1544.5H2880" stroke="#dcdcdc" />
                <path v-for="y in sideLevels" :key="y" class="level" :d="`M2672,${y}.5H2880`" />
                <path class="dash" d="M2672,358.5H2880M2672,808.5H2880" /><path class="dash soft" d="M2672,1375.5H2880M2672,1510.5H2880" /><path class="dash pale" d="M2672,1442.5H2880" />
                <path d="M2672,742.5H2880" stroke="#26a69a" stroke-dasharray="1 2" />
                <path d="M2672,594 L2880,452M2672,670 L2880,652" stroke="#333" stroke-width="1.4" />
                <g v-for="c in sideCandles" :key="c.x" :fill="c.up ? '#26a69a' : '#ef5350'"><rect :x="c.x" :y="c.high" width="1" :height="c.low - c.high" /><rect :x="c.x - 1" :y="c.top" width="3" :height="c.h" /></g>
                <path class="dash pale" d="M2763.5,89V1544" />
                <path :d="curve(sideFast)" stroke="#f0437d" stroke-width="2" fill="none" /><path :d="curve(sideSlow)" stroke="#f57f00" stroke-width="2" fill="none" />
                <g class="zone-text"><text x="2765" y="474">1D FVG</text><text x="2775" y="583">1D FVG</text></g>
                <g class="wave-text"><text x="2692" y="619" fill="#80838e">(0)</text><text x="2692" y="607" fill="#e91e63">(2)</text><text x="2692" y="595">(3)</text></g>
                <rect v-for="b in sideBars" :key="b.x" :x="b.x" y="1223" width="3" :height="b.h" :fill="b.fill" />
                <path :d="line(sideRsi)" stroke="#7e57c2" stroke-width="1.6" fill="none" /><path :d="curve(sideRsiMa)" stroke="#fdd835" stroke-width="1.6" fill="none" />
                <text x="2731" y="1073" class="author">@Nephew_Sa</text>
                <g class="bolt"><circle cx="2845" cy="1034" r="17" /><path d="M2850,1026 L2838,1034H2852L2840,1043" /></g>
                <g class="flag"><circle cx="2852" cy="1078" r="18" /><circle cx="2845" cy="1078" r="18" /><circle cx="2845" cy="1078" r="14" class="field" /><path d="M2845,1073H2859M2833,1082H2857M2839,1089H2851" class="stripes" /><path d="M2845,1065V1079H2831Q2832,1065 2845,1065Z" class="canton" /><path d="M2835,1071H2844M2834,1075H2844" class="stars" /></g>
                <g class="time-text"><text x="2840" y="1576">Дек</text></g>
                <g class="time-tag"><rect x="2685" y="1544" width="156" height="42" rx="2" fill="#131722" /><text x="2701" y="1576">сб 08 Ноя '25</text></g>
              </g>
            </svg>
            <div class="side-legend">
              <div class="side-title">
                <svg width="32" height="32" viewBox="0 0 32 32"><circle cx="16" cy="16" r="16" fill="#131313" /><path d="M8,8 C12,16 20,16 24,8M8,24 C12,16 20,16 24,24" stroke="#fff" stroke-width="2" fill="none" /></svg>
                <h2>XRPU…</h2><span class="status"></span>
              </div>
              <button class="sell"><b>2,1883</b>ПРОДАТЬ</button>
              <button class="buy"><b>2,1883</b>КУПИТЬ</button>
              <button class="chip layers" aria-label="Слои"><svg width="22" height="22" viewBox="0 0 22 22"><path d="M11,2 L20,9 11,16 2,9ZM2,13 L11,20 20,13" /></svg></button>
            </div>
          </section>
        </div>

        <footer class="footer">
          <button v-for="r in ranges" :key="r">{{ r }}</button>
          <i class="sep"></i>
          <button aria-label="Перейти к дате"><svg width="36" height="36" viewBox="0 0 36 36"><path d="M4,16V8Q4,5 7,5H31Q34,5 34,8V29Q34,33 31,33H21M4,12H34M12,1V8M26,1V8M1,26H16M11,20 L17,26 11,32" /></svg></button>
          <span class="clock">17:28:48 UTC+7</span>
          <i class="sep"></i>
          <button class="full" aria-label="Во весь экран"><svg width="26" height="26" viewBox="0 0 26 26"><path d="M15,2H24V11M2,15V24H11" /></svg></button>
        </footer>
      </div>

      <aside class="rail">
        <button aria-label="Список"><svg width="52" height="52" viewBox="0 0 52 52"><path d="M10,7H43V45L26,38 10,45ZM17,16H36M17,23H36M17,30H36" /></svg></button>
        <button aria-label="Оповещения"><svg width="52" height="52" viewBox="0 0 52 52"><circle cx="27" cy="27" r="18" /><path d="M27,16V29H19M5,14 L12,6" /></svg><span class="badge wide">99+</span></button>
        <button aria-label="Слои"><svg width="52" height="52" viewBox="0 0 52 52"><path d="M26,9 L45,22 26,32 7,22ZM7,31 L26,43 45,31" /></svg></button>
        <button aria-label="Чат"><svg width="52" height="52" viewBox="0 0 52 52"><path d="M10,9H36Q40,9 40,13V32Q40,36 36,36H15L7,43V13Q7,9 10,9M40,23H43Q46,24 46,28V50L38,43H26Q22,42 22,36" /></svg></button>
        <span class="spacer"></span>
        <button aria-label="Скринеры"><svg width="52" height="52" viewBox="0 0 52 52"><circle cx="26" cy="26" r="24" /><circle cx="26" cy="26" r="13" /><circle cx="26" cy="26" r="2" class="solid" /><path d="M26,26 L43,10" /></svg></button>
        <button aria-label="Календарь"><svg width="52" height="52" viewBox="0 0 52 52"><path d="M12,9H10Q6,9 6,13V41Q6,45 10,45H43Q47,45 47,41V13Q47,9 43,9H40M18,9H34M6,20H47M13,5H18V13H13ZM34,5H39V13H34Z" /></svg></button>
        <button aria-label="Лента"><svg width="52" height="52" viewBox="0 0 52 52"><circle cx="10" cy="42" r="3" /><path d="M7,29Q24,31 24,45M7,18Q34,20 34,45M7,8Q45,10 45,45" /></svg><span class="badge feed">13</span></button>
        <button aria-label="Уведомления"><svg width="52" height="52" viewBox="0 0 52 52"><path d="M9,36V22Q10,12 20,9Q21,3 26,3T32,9Q42,12 43,22V36M6,36H46V38Q46,43 42,43H10Q6,43 6,38ZM20,43Q26,52 32,43" /></svg></button>
        <button class="apps" aria-label="Продукты"><svg width="32" height="32" viewBox="0 0 32 32"><rect v-for="n in 9" :key="n" :x="((n - 1) % 3) * 12" :y="Math.floor((n - 1) / 3) * 12" width="8" height="8" rx="2" /></svg></button>
        <i class="rule"></i>
      </aside>
    </main>

    <svg class="ink" width="100%" height="100%">
      <g transform="translate(980,0) scale(.6313,.3333)"><path :d="notesLeft" /></g>
      <g transform="translate(1960,0) scale(.641,.3333)"><path :d="notesRight" /><path :d="notesThick" class="thick" /></g>
      <path d="M776,658H953V1536H776ZM788,542 L782,1348M824,516 L820,1352" class="thin" />
      <path d="M758,720H800V724M650,724H680L705,721M670,766L704,764" />
      <path d="M762,656Q766,650 771,652L773,660Q768,668 762,662Z" class="blob" />
      <path d="M674,745L677,737 679,743 675,745M719,759L721,753 721,757" class="spot" />
      <path d="M720,1336H726V1347L722,1344ZM673,1322L675,1328" />
      <path d="M572,680H601M586,666V694" class="cursor" />
    </svg>
  </div>
</template>

<style>
html, body { margin: 0; background: #fff; }
</style>

<style scoped>
.app { position: relative; box-sizing: border-box; height: 100vh; padding-left: 2px; overflow: hidden; display: flex; flex-direction: column; font-family: "Open Sans", "Noto Sans", sans-serif; font-size: 22px; color: #131313; }
button { border: 0; padding: 0; margin: 0; background: none; font: inherit; color: inherit; display: flex; align-items: center; justify-content: center; flex: none; }
svg { display: block; flex: none; }
button svg { fill: none; stroke: currentColor; stroke-width: 2; }
.solid { fill: currentColor; }
.strip { height: 13px; border-bottom: 2px solid #e0e0e0; flex: none; }
.header { height: 67px; flex: none; display: flex; align-items: center; white-space: nowrap; font-size: 23px; }
.sep { width: 2px; height: 39px; background: #ebebeb; flex: none; }
.m10 { margin-left: 10px; }
.m14 { margin-left: 14px; }
.m20 { margin-left: 20px; }
.m24 { margin-left: 24px; }
.m28 { margin-left: 28px; }
.m32 { margin-left: 32px; }
.m36 { margin-left: 36px; }
.m44 { margin-left: 44px; }
.faint { color: #9a9a9a; }
.avatar { position: relative; width: 54px; height: 60px; overflow: hidden; justify-content: flex-start; }
.face { width: 48px; height: 48px; margin-left: -16px; border-radius: 24px; background: #8a62a3; color: #fff; font-size: 28px; display: flex; align-items: center; justify-content: center; }
.badge { position: absolute; left: 20px; top: 0; min-width: 30px; height: 28px; box-sizing: border-box; padding: 0 4px; border-radius: 16px; background: #f23645; color: #fff; font-size: 18px; font-weight: 600; line-height: 28px; text-align: center; }
.search { gap: 10px; }
.search b { font-weight: 600; }
.intervals { display: flex; padding-left: 8px; font-size: 22px; }
.intervals button { height: 59px; padding: 0 11px; }
.intervals .active { background: #ebebeb; border-radius: 10px; padding: 0 8px; margin: 0 3px; }
.header-end { margin-left: auto; padding-right: 7px; display: flex; align-items: center; }
.publish { width: 47px; height: 47px; margin-left: 495px; border-radius: 24px; background: #2e2e2e; }
.favorites { position: absolute; right: 24px; top: 15px; width: 508px; height: 67px; box-sizing: border-box; padding: 0 14px; background: #fff; border-radius: 8px; box-shadow: 0 3px 8px rgba(0, 0, 0, .25); display: flex; align-items: center; justify-content: space-between; z-index: 2; }
.grip { fill: #c4c4c4; }
.body { flex: 1; min-height: 0; display: flex; gap: 7px; padding-top: 7px; background: #ebebeb; }
.tools { width: 54px; overflow: hidden; background: #fff; border-radius: 0 10px 0 0; display: flex; flex-direction: column; gap: 8px; padding-top: 15px; box-sizing: border-box; }
.tools button { width: 58px; height: 58px; margin-left: -20px; border-radius: 10px; }
.tools .on { background: #ebebeb; }
.tools .dark { background: #2e2e2e; color: #fff; }
.tools .last { margin-top: auto; height: 20px; border-radius: 10px 10px 0 0; align-items: flex-start; overflow: hidden; }
.rule { height: 2px; margin: 8px 14px 8px 0; background: #ebebeb; flex: none; }
.center { flex: 1; min-width: 0; display: flex; flex-direction: column; gap: 1px; padding-bottom: 2px; }
.charts { flex: 1; min-height: 0; display: flex; gap: 3px; padding-right: 1px; }
.frame { position: relative; flex: 1; min-width: 0; display: flex; background: #fff; border: 3px solid #2e2e2e; border-radius: 10px; overflow: hidden; }
.plot { position: relative; flex: 1; min-width: 0; overflow: hidden; }
.axis { position: relative; width: 91px; overflow: hidden; }
.side { position: relative; width: 208px; background: #fff; border-radius: 10px; overflow: hidden; }
.fill { position: absolute; left: 0; top: 0; }
.grid path { stroke: #2a2e39; stroke-opacity: .07; shape-rendering: crispEdges; }
.level { stroke: #e91e63; stroke-width: 1; shape-rendering: crispEdges; }
.pane-line { stroke: #e0e3eb; stroke-width: 2; }
.dash { stroke: #111; stroke-dasharray: 6 5; shape-rendering: crispEdges; }
.soft { stroke: #787b86; }
.pale { stroke: #9598a1; }
.candles path { fill: none; shape-rendering: crispEdges; }
.event-lines path { stroke: #1848cc; stroke-width: 5; stroke-dasharray: 25 30; }
.bolt circle, .bolt path { fill: #fff; stroke: #9c27b0; stroke-width: 2; }
.bolt path { fill: none; stroke-width: 3; }
.bolt .halo { stroke: #fff; }
.time-text text, .axis-text text { font-size: 20px; fill: #131722; }
.time-text text { text-anchor: middle; }
.time-tag text, .axis-tag text { font-size: 20px; fill: #fff; font-weight: 600; }
.time-tag text { font-size: 19px; }
.axis-tag .countdown { fill-opacity: .75; font-weight: 400; }
.legend { position: relative; padding: 8px 0 0 11px; display: flex; flex-direction: column; align-items: flex-start; gap: 12px; }
.title { height: 33px; display: flex; align-items: center; white-space: nowrap; background: rgba(255, 255, 255, .5); }
h1, h2 { margin: 0; font-weight: 400; font-size: 26px; line-height: 33px; color: #131722; }
.coin { margin-right: 4px; }
.status { width: 14px; height: 14px; border: 9px solid #dcf2ee; border-radius: 16px; background: #089981; background-clip: padding-box; margin: 0 16px; flex: none; }
.ohlc { margin: 0; display: flex; gap: 8px; font-size: 22px; }
.ohlc em { font-style: normal; color: #26a69a; margin-left: 2px; }
.trade { display: flex; align-items: center; gap: 14px; background: rgba(255, 255, 255, .5); }
.sell, .buy { width: 126px; height: 60px; box-sizing: border-box; border: 1px solid; border-radius: 12px; background: #fff; flex-direction: column; font-size: 19px; line-height: 24px; }
.buy { width: 112px; color: #2962ff; }
.sell { color: #f23645; }
.sell b, .buy b { font-size: 20px; font-weight: 600; }
.spread { font-size: 17px; }
.chip { box-sizing: border-box; border: 1px solid #dedede; border-radius: 6px; background: rgba(255, 255, 255, .85); gap: 8px; }
.more { display: flex; align-items: center; gap: 28px; }
.more .chip { width: 54px; height: 35px; font-size: 20px; }
.sync { width: 31px; height: 31px; border-radius: 16px; background: rgba(124, 77, 255, .2); display: flex; align-items: center; justify-content: center; }
.sync svg { fill: none; stroke: #651fff; stroke-width: 3; }
.sync .tip { fill: #651fff; stroke: none; }
.pane-legend { position: absolute; left: 12px; bottom: 115px; display: flex; align-items: center; gap: 30px; }
.pane-legend .chip { width: 48px; height: 36px; }
.corner { position: absolute; right: 9px; top: 4px; display: flex; gap: 7px; }
.corner .chip { width: 41px; height: 42px; }
.currency { position: absolute; left: 7px; top: 4px; width: 79px; height: 44px; box-sizing: border-box; border: 1px solid #e0e0e0; border-radius: 6px; background: #fff; font-size: 19px; gap: 10px; }
.axis-settings { position: absolute; left: 33px; bottom: 6px; }
.side-legend { position: relative; padding: 12px 0 0 14px; display: flex; flex-direction: column; align-items: flex-start; gap: 7px; }
.side-title { height: 37px; display: flex; align-items: center; gap: 8px; }
.side-title h2 { width: 96px; }
.side-title .status { margin: 0 0 0 5px; }
.side .layers { width: 35px; height: 36px; margin-top: 4px; }
.zone-text text { font-size: 16px; fill: #f23645; }
.wave-text text { font-size: 20px; font-weight: 600; text-anchor: end; }
.author { font-size: 17px; fill: #b2b5be; }
.flag circle { fill: #fff; stroke: #f23645; stroke-width: 2; }
.flag .field { stroke: none; }
.flag .stripes { stroke: #ef5350; stroke-width: 4; }
.flag .canton { fill: #1e88e5; }
.flag .stars { stroke: #fff; stroke-width: 2; stroke-dasharray: 2 2; }
.footer { height: 67px; flex: none; background: #fff; border-radius: 10px; display: flex; align-items: center; padding: 0 27px 0 24px; gap: 22px; white-space: nowrap; }
.footer .full { margin-left: 6px; }
.footer .clock { margin-left: auto; font-size: 23px; }
.rail { width: 77px; background: #fff; border-radius: 10px 0 0 0; display: flex; flex-direction: column; align-items: center; gap: 28px; padding-top: 16px; box-sizing: border-box; }
.rail button { position: relative; width: 52px; height: 52px; }
.rail .badge { left: auto; right: -6px; top: -7px; padding: 0 6px; }
.spacer { flex: 1; }
.rail .apps { width: 60px; height: 60px; margin: -4px 0; border-radius: 30px; background: #2e2e2e; }
.apps svg { fill: #fff; stroke: none; }
.rail .rule { width: 58px; margin: -4px 0 19px; }
.ink { position: absolute; left: 0; top: 0; z-index: 3; pointer-events: none; fill: none; stroke: #2443e8; stroke-width: 4; stroke-linejoin: round; stroke-linecap: round; }
.ink path { vector-effect: non-scaling-stroke; }
.ink .thick { stroke-width: 5; }
.ink .thin { stroke-width: 3; }
.ink .blob { stroke-width: 9; }
.ink .spot { stroke-width: 7; }
.ink .cursor { stroke: #000; stroke-width: 3; stroke-linecap: butt; }
</style>
